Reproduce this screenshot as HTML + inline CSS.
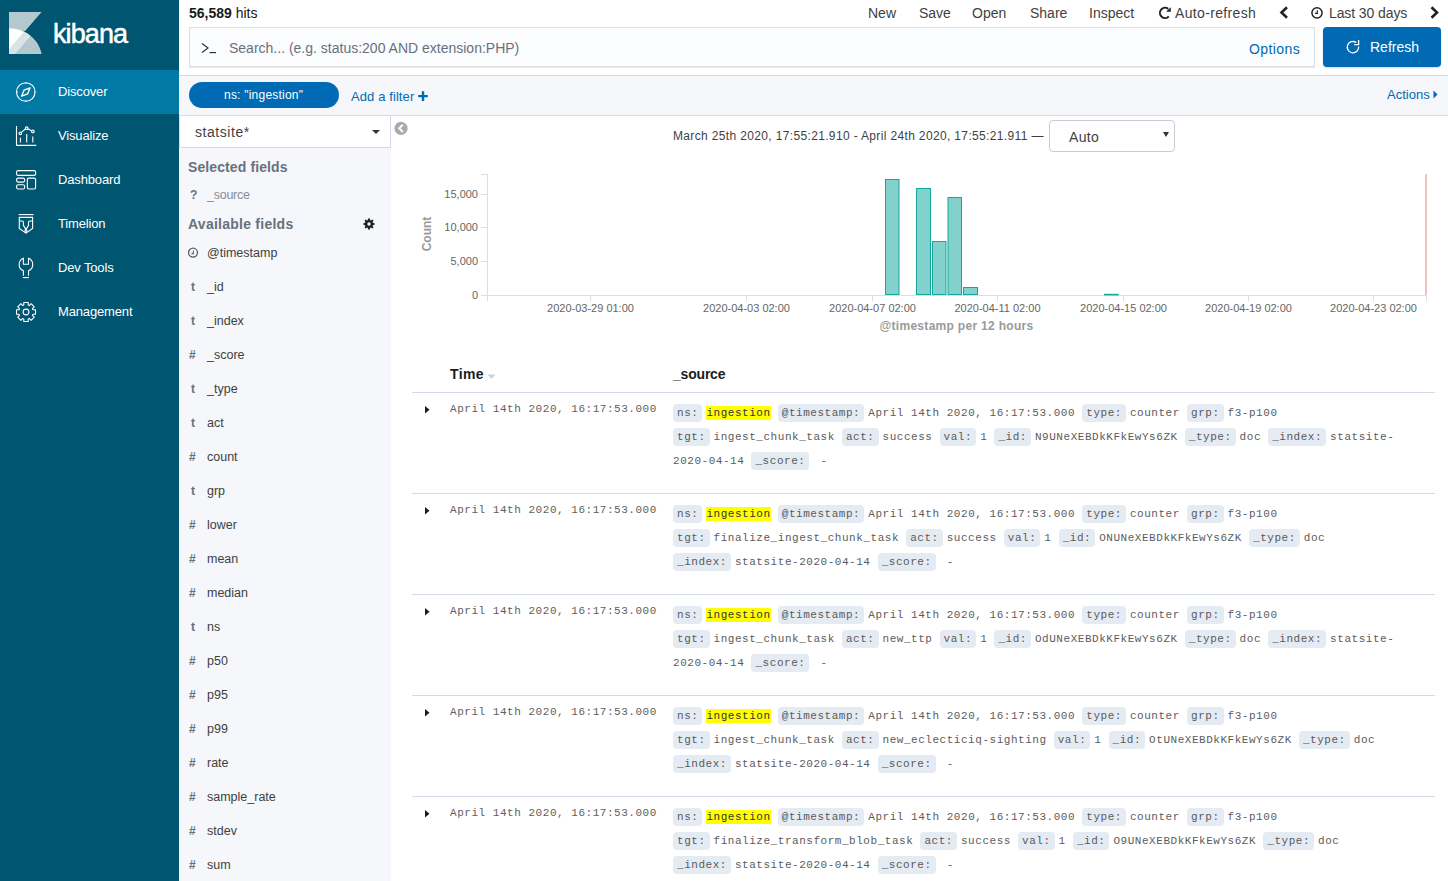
<!DOCTYPE html>
<html><head><meta charset="utf-8">
<style>
*{box-sizing:border-box;margin:0;padding:0}
html,body{width:1448px;height:881px;overflow:hidden;background:#fff;font-family:"Liberation Sans",sans-serif;color:#3f3f3f}
.abs{position:absolute}
#nav{position:absolute;left:0;top:0;width:179px;height:881px;background:#005571}
#nav .active{position:absolute;left:0;top:70px;width:179px;height:44px;background:#0079a5}
.navlbl{position:absolute;left:58px;font-size:13px;color:#fff;line-height:16px;white-space:nowrap;letter-spacing:-0.15px}
.navico{position:absolute;left:0;top:0}
.t{position:absolute;white-space:nowrap;line-height:1}
.mono{font-family:"Liberation Mono",monospace}
.row .dt{background:#e5ebf3;border-radius:4px;padding:2.77px 4px;margin-right:4px;color:#5a5a5a}
.src{position:absolute;left:673px;font-family:"Liberation Mono",monospace;font-size:11px;letter-spacing:0.533px;line-height:24px;white-space:pre;color:#5c5c5c}
.src mark{background:#ff0;padding:0.77px 0;color:#333}
.tm{position:absolute;left:450px;font-family:"Liberation Mono",monospace;font-size:11px;letter-spacing:0.533px;line-height:12px;white-space:pre;color:#606060}
.hr{position:absolute;left:412px;width:1023px;height:1px;background:#d3dae6}
</style></head><body>
<div id="nav">
  <div class="active"></div>
  <svg class="navico" width="179" height="340" viewBox="0 0 179 340">
    <!-- logo -->
    <defs><clipPath id="arc"><path d="M9,28.2 C26,28.2 39,40 41.6,54 L9,54 Z"/></clipPath></defs>
    <polygon points="9,12 41.6,12 24.9,31.2 9,28.2" fill="#b4c9cf"/>
    <g clip-path="url(#arc)">
      <rect x="9" y="20" width="40" height="40" fill="#b4c9cf"/>
      <polygon points="0,0 51.9,0 0,60" fill="#fff"/>
      <polygon points="51.9,0 61.7,0 0,71.4 0,60" fill="#d9e4e7"/>
    </g>

    <g fill="none" stroke="#fff" stroke-width="1.1">
      <circle cx="25.8" cy="92" r="9.3"/>
      <path d="M25.8,82.7v1.2M25.8,100.1v1.2M16.5,92h1.2M34,92h1.2" stroke-width="1"/>
      <path d="M30.1,87.8 L27.7,93.8 L21.6,96.2 L24.0,90.2 Z" stroke-width="1.3" stroke-linejoin="round"/>
      <path d="M16.5,126v19.4h19.8" />
      <path d="M20.4,137.8v4.8M26.7,134v8.6M32.8,136.6v6" />
      <path d="M21.3,132.4 L25.7,128.8 M27.7,128.8 L31.8,130.8"/>
      <circle cx="20.3" cy="133.3" r="1.3"/><circle cx="26.7" cy="128.2" r="1.3"/><circle cx="32.9" cy="131.4" r="1.3"/>
      <rect x="16.6" y="170.6" width="19" height="4.8" rx="1.5"/>
      <rect x="16.6" y="178.1" width="8" height="4" rx="1.5"/>
      <rect x="16.6" y="184.7" width="8" height="4.3" rx="1.5"/>
      <rect x="27.3" y="178.1" width="8.3" height="10.9" rx="1.5"/>
      <path d="M18.6,214.6h15"/>
      <path d="M19.3,217.4H32.6V228.4L25.95,233.1L19.3,228.4Z"/>
      <path d="M19.3,221H22.2Q23.4,221 23.4,222.2V225.4L25.95,229.6L28.5,225.4V222.2Q28.5,221 29.7,221H32.6"/><circle cx="25.95" cy="231" r="1.1"/>
      <path d="M23.4,275.8 V270.8 A6.8,6.8 0 0 1 23.4,258.2 V264.2 H28.5 V258.2 A6.8,6.8 0 0 1 28.5,270.8 V275.8"/>
      <path d="M22.9,277.6H28.9"/>
      <circle cx="26" cy="312" r="2.9"/>
      <path stroke-linejoin="round" d="M23.80,305.04 L23.80,302.50 L28.20,302.50 L28.20,305.04 A7.3,7.3 0 0 1 29.37,305.52 L31.16,303.73 L34.27,306.84 L32.48,308.63 A7.3,7.3 0 0 1 32.96,309.80 L35.50,309.80 L35.50,314.20 L32.96,314.20 A7.3,7.3 0 0 1 32.48,315.37 L34.27,317.16 L31.16,320.27 L29.37,318.48 A7.3,7.3 0 0 1 28.20,318.96 L28.20,321.50 L23.80,321.50 L23.80,318.96 A7.3,7.3 0 0 1 22.63,318.48 L20.84,320.27 L17.73,317.16 L19.52,315.37 A7.3,7.3 0 0 1 19.04,314.20 L16.50,314.20 L16.50,309.80 L19.04,309.80 A7.3,7.3 0 0 1 19.52,308.63 L17.73,306.84 L20.84,303.73 L22.63,305.52 A7.3,7.3 0 0 1 23.80,305.04Z"/>
    </g>
  </svg>
</div>
<div class="t" style="left:53px;top:21px;font-size:27px;color:#fff;letter-spacing:-0.9px;-webkit-text-stroke:0.5px #fff">kibana</div>
<div class="navlbl" style="top:84px">Discover</div>
<div class="navlbl" style="top:128px">Visualize</div>
<div class="navlbl" style="top:172px">Dashboard</div>
<div class="navlbl" style="top:216px">Timelion</div>
<div class="navlbl" style="top:260px">Dev Tools</div>
<div class="navlbl" style="top:304px">Management</div>

<!-- top bar -->
<div class="t" style="left:189px;top:6px;font-size:14px;color:#1a1a1a"><b>56,589</b> hits</div>
<div class="t" style="left:868px;top:6px;font-size:14px;color:#3f3f3f">New</div>
<div class="t" style="left:919px;top:6px;font-size:14px;color:#3f3f3f">Save</div>
<div class="t" style="left:972px;top:6px;font-size:14px;color:#3f3f3f">Open</div>
<div class="t" style="left:1030px;top:6px;font-size:14px;color:#3f3f3f">Share</div>
<div class="t" style="left:1089px;top:6px;font-size:14px;color:#3f3f3f">Inspect</div>
<div class="t" style="left:1175px;top:6px;font-size:14px;color:#3f3f3f;letter-spacing:0.35px">Auto-refresh</div>
<div class="t" style="left:1329px;top:6px;font-size:14px;color:#3f3f3f;letter-spacing:-0.1px">Last 30 days</div>

<!-- search -->
<div class="abs" style="left:189px;top:27px;width:1126px;height:40px;background:#fbfcfd;border:1px solid #dedfe1;box-shadow:0 1px 1px rgba(0,0,0,.08)"></div>
<div class="t" style="left:229px;top:41px;font-size:14px;color:#69707d">Search... (e.g. status:200 AND extension:PHP)</div>
<div class="t" style="left:1249px;top:42px;font-size:14px;color:#006bb4;letter-spacing:0.4px">Options</div>
<div class="abs" style="left:1323px;top:27px;width:118px;height:40px;background:#006bb4;border-radius:4px;box-shadow:0 1px 2px rgba(0,0,0,.15)"></div>
<div class="t" style="left:1370px;top:40px;font-size:14px;color:#fff">Refresh</div>

<!-- filter bar -->
<div class="abs" style="left:179px;top:75px;width:1269px;height:41px;background:#f5f7fa;border-top:1px solid #d3dae6;border-bottom:1px solid #d3dae6"></div>
<div class="abs" style="left:189px;top:82px;width:150px;height:26px;background:#006bb4;border-radius:13px"></div>
<div class="t" style="left:224px;top:89px;font-size:12px;color:#fff;letter-spacing:0.22px">ns: "ingestion"</div>
<div class="t" style="left:351px;top:90px;font-size:13px;color:#006bb4;letter-spacing:0.1px">Add a filter</div>
<div class="t" style="left:1387px;top:88px;font-size:13px;color:#006bb4">Actions</div>

<!-- discover sidebar -->
<div class="abs" style="left:179px;top:116px;width:212px;height:765px;background:#f5f7fa"></div>
<div class="abs" style="left:179px;top:116px;width:212px;height:32px;background:#fff;border:1px solid #d3dae6;border-top:0"></div>
<div class="t" style="left:195px;top:125px;font-size:14px;color:#3f3f3f;letter-spacing:0.55px">statsite*</div>


<!-- top nav icons -->
<svg class="abs" style="left:0;top:0" width="1448" height="160">
  <!-- auto-refresh icon -->
  <path d="M1168.2,8.9 A5.1,5.1 0 1 0 1168.8,16.4" fill="none" stroke="#222" stroke-width="2"/>
  <path d="M1170.8,7.2 L1170.8,11.8 L1166.1,11.8 Z" fill="#222"/>
  <!-- chevrons -->
  <path d="M1287,7.2 L1281.5,12.5 L1287,17.8" fill="none" stroke="#222" stroke-width="2.6"/>
  <path d="M1431.5,7.2 L1437,12.5 L1431.5,17.8" fill="none" stroke="#222" stroke-width="2.6"/>
  <!-- clock -->
  <circle cx="1317" cy="12.8" r="5.1" fill="none" stroke="#222" stroke-width="1.5"/>
  <path d="M1317.3,10.2 V13.3 H1315" fill="none" stroke="#222" stroke-width="1.2"/>
  <!-- prompt >_ -->
  <path d="M202,43.5 L208,48 L202,52.5" fill="none" stroke="#333" stroke-width="1.2"/>
  <path d="M209.5,52.6 H216" stroke="#333" stroke-width="1.2"/>
  <!-- refresh icon -->
  <path d="M1356.3,42.6 A5.7,5.7 0 1 0 1358.6,46.6" fill="none" stroke="#fff" stroke-width="1.3"/>
  <path d="M1358.6,40.1 V44.6 H1354.2" fill="none" stroke="#fff" stroke-width="1.3"/>
  <!-- add filter plus -->
  <path d="M423,91.3 v9.6 M418.2,96.1 h9.6" stroke="#006bb4" stroke-width="2.4"/>
  <!-- actions caret -->
  <path d="M1433.5,90.5 L1437.5,94.5 L1433.5,98.5 Z" fill="#006bb4"/>
  <!-- index caret -->
  <path d="M372,130 L380,130 L376,134 Z" fill="#333"/>
  <!-- collapse button -->
  <circle cx="401" cy="128.3" r="6.6" fill="#aaa"/>
  <path d="M402.8,124.6 L399.3,128.3 L402.8,132" fill="none" stroke="#fff" stroke-width="2"/>
</svg>

<!-- sidebar field headers -->
<div class="t" style="left:188px;top:160px;font-size:14px;font-weight:bold;color:#69707d;letter-spacing:0.1px">Selected fields</div>
<div class="t" style="left:190px;top:189px;font-size:12px;font-weight:bold;color:#69707d">?</div>
<div class="t" style="left:207px;top:189px;font-size:12.5px;color:#8a8d93;letter-spacing:-0.25px">_source</div>
<div class="t" style="left:188px;top:217px;font-size:14px;font-weight:bold;color:#69707d;letter-spacing:0.25px">Available fields</div>
<svg class="abs" style="left:362px;top:217px" width="14" height="14" viewBox="0 0 14 14"><path fill-rule="evenodd" fill="#222" d="M11.07,5.98 L12.49,5.91 L12.49,8.09 L11.07,8.02 L10.60,9.16 L11.66,10.11 L10.11,11.66 L9.16,10.60 L8.02,11.07 L8.09,12.49 L5.91,12.49 L5.98,11.07 L4.84,10.60 L3.89,11.66 L2.34,10.11 L3.40,9.16 L2.93,8.02 L1.51,8.09 L1.51,5.91 L2.93,5.98 L3.40,4.84 L2.34,3.89 L3.89,2.34 L4.84,3.40 L5.98,2.93 L5.91,1.51 L8.09,1.51 L8.02,2.93 L9.16,3.40 L10.11,2.34 L11.66,3.89 L10.60,4.84Z M8.7,7 A1.7,1.7 0 1 0 5.3,7 A1.7,1.7 0 1 0 8.7,7Z"/></svg>
<svg class="abs" style="left:188px;top:247px" width="11" height="11" viewBox="0 0 11 11"><circle cx="5" cy="5.6" r="4.5" fill="none" stroke="#5a6070" stroke-width="1.3"/><path d="M5.4,3.4V6.6H3.4" fill="none" stroke="#5a6070" stroke-width="1.1"/></svg>
<div class="t" style="left:207px;top:247px;font-size:12.5px;color:#3f3f3f">@timestamp</div>
<div class="t" style="left:191px;top:281px;font-size:12px;font-weight:bold;color:#69707d">t</div><div class="t" style="left:207px;top:281px;font-size:12.5px;color:#3f3f3f">_id</div>
<div class="t" style="left:191px;top:315px;font-size:12px;font-weight:bold;color:#69707d">t</div><div class="t" style="left:207px;top:315px;font-size:12.5px;color:#3f3f3f">_index</div>
<div class="t" style="left:189px;top:349px;font-size:12px;font-weight:bold;color:#69707d">#</div><div class="t" style="left:207px;top:349px;font-size:12.5px;color:#3f3f3f">_score</div>
<div class="t" style="left:191px;top:383px;font-size:12px;font-weight:bold;color:#69707d">t</div><div class="t" style="left:207px;top:383px;font-size:12.5px;color:#3f3f3f">_type</div>
<div class="t" style="left:191px;top:417px;font-size:12px;font-weight:bold;color:#69707d">t</div><div class="t" style="left:207px;top:417px;font-size:12.5px;color:#3f3f3f">act</div>
<div class="t" style="left:189px;top:451px;font-size:12px;font-weight:bold;color:#69707d">#</div><div class="t" style="left:207px;top:451px;font-size:12.5px;color:#3f3f3f">count</div>
<div class="t" style="left:191px;top:485px;font-size:12px;font-weight:bold;color:#69707d">t</div><div class="t" style="left:207px;top:485px;font-size:12.5px;color:#3f3f3f">grp</div>
<div class="t" style="left:189px;top:519px;font-size:12px;font-weight:bold;color:#69707d">#</div><div class="t" style="left:207px;top:519px;font-size:12.5px;color:#3f3f3f">lower</div>
<div class="t" style="left:189px;top:553px;font-size:12px;font-weight:bold;color:#69707d">#</div><div class="t" style="left:207px;top:553px;font-size:12.5px;color:#3f3f3f">mean</div>
<div class="t" style="left:189px;top:587px;font-size:12px;font-weight:bold;color:#69707d">#</div><div class="t" style="left:207px;top:587px;font-size:12.5px;color:#3f3f3f">median</div>
<div class="t" style="left:191px;top:621px;font-size:12px;font-weight:bold;color:#69707d">t</div><div class="t" style="left:207px;top:621px;font-size:12.5px;color:#3f3f3f">ns</div>
<div class="t" style="left:189px;top:655px;font-size:12px;font-weight:bold;color:#69707d">#</div><div class="t" style="left:207px;top:655px;font-size:12.5px;color:#3f3f3f">p50</div>
<div class="t" style="left:189px;top:689px;font-size:12px;font-weight:bold;color:#69707d">#</div><div class="t" style="left:207px;top:689px;font-size:12.5px;color:#3f3f3f">p95</div>
<div class="t" style="left:189px;top:723px;font-size:12px;font-weight:bold;color:#69707d">#</div><div class="t" style="left:207px;top:723px;font-size:12.5px;color:#3f3f3f">p99</div>
<div class="t" style="left:189px;top:757px;font-size:12px;font-weight:bold;color:#69707d">#</div><div class="t" style="left:207px;top:757px;font-size:12.5px;color:#3f3f3f">rate</div>
<div class="t" style="left:189px;top:791px;font-size:12px;font-weight:bold;color:#69707d">#</div><div class="t" style="left:207px;top:791px;font-size:12.5px;color:#3f3f3f">sample_rate</div>
<div class="t" style="left:189px;top:825px;font-size:12px;font-weight:bold;color:#69707d">#</div><div class="t" style="left:207px;top:825px;font-size:12.5px;color:#3f3f3f">stdev</div>
<div class="t" style="left:189px;top:859px;font-size:12px;font-weight:bold;color:#69707d">#</div><div class="t" style="left:207px;top:859px;font-size:12.5px;color:#3f3f3f">sum</div>

<!-- chart header -->
<div class="t" style="left:673px;top:129.5px;font-size:12px;color:#3f3f3f;letter-spacing:0.35px">March 25th 2020, 17:55:21.910 - April 24th 2020, 17:55:21.911 —</div>
<div class="abs" style="left:1049px;top:120px;width:126px;height:32px;border:1px solid #c9cdd4;border-radius:4px;background:#fff"></div>
<div class="t" style="left:1069px;top:130px;font-size:14px;color:#3f3f3f;letter-spacing:0.3px">Auto</div>
<svg class="abs" style="left:1160px;top:130px" width="12" height="10"><path d="M3,2 L9,2 L6,7 Z" fill="#333"/></svg>
<svg class="abs" style="left:400px;top:160px" width="1048" height="180" viewBox="400 160 1048 180">
  <g stroke="#ddd" stroke-width="1" fill="none" shape-rendering="crispEdges">
    <path d="M487.5,174 V295.5 H1426"/>
    <path d="M481,174.5 H487 M481,194.5 H487 M481,227.5 H487 M481,261.5 H487 M481,295.5 H487"/>
    <path d="M487.5,295 V301 M590.5,295 V301 M746.5,295 V301 M872.5,295 V301 M997.5,295 V301 M1123.5,295 V301 M1248.5,295 V301 M1373.5,295 V301 M1426.5,295 V301"/>
  </g>
  <g font-family="Liberation Sans" font-size="11" fill="#666" text-anchor="end">
    <text x="478" y="198">15,000</text>
    <text x="478" y="231">10,000</text>
    <text x="478" y="265">5,000</text>
    <text x="478" y="298.5">0</text>
  </g>
  <g font-family="Liberation Sans" font-size="11" fill="#666" text-anchor="middle">
    <text x="590.5" y="312">2020-03-29 01:00</text>
    <text x="746.5" y="312">2020-04-03 02:00</text>
    <text x="872.5" y="312">2020-04-07 02:00</text>
    <text x="997.5" y="312">2020-04-11 02:00</text>
    <text x="1123.5" y="312">2020-04-15 02:00</text>
    <text x="1248.5" y="312">2020-04-19 02:00</text>
    <text x="1373.5" y="312">2020-04-23 02:00</text>
  </g>
  <text x="956.5" y="330" font-family="Liberation Sans" font-size="12" font-weight="bold" fill="#999" text-anchor="middle" letter-spacing="0.3">@timestamp per 12 hours</text>
  <text transform="translate(430.5 234) rotate(-90)" font-family="Liberation Sans" font-size="12" font-weight="bold" fill="#999" text-anchor="middle">Count</text>
  <g fill="#83d1cc" stroke="#13a89d" stroke-width="1">
    <rect x="885.5" y="179.5" width="13.5" height="115"/>
    <rect x="916.5" y="188.5" width="14" height="106"/>
    <rect x="932.5" y="241.5" width="13.5" height="53"/>
    <rect x="948" y="197.5" width="13.5" height="97"/>
    <rect x="963.5" y="287.5" width="14" height="7"/>
    <rect x="1104.5" y="294.2" width="14" height="0.8" stroke-width="0.8"/>
  </g>
  <path d="M1426,174 V295" stroke="#e9a7aa" stroke-width="1.4"/>
</svg>

<!-- table -->
<div class="t" style="left:450px;top:367px;font-size:14px;font-weight:bold;color:#1a1c21;letter-spacing:0.4px">Time</div>
<svg class="abs" style="left:486px;top:373px" width="12" height="8"><path d="M1.5,1.5 L9.5,1.5 L5.5,6 Z" fill="#cdd3de"/></svg>
<div class="t" style="left:673px;top:367px;font-size:14px;font-weight:bold;color:#1a1c21;letter-spacing:-0.2px">_source</div>
<div class="abs" style="left:412px;top:392px;width:1023px;height:1px;background:#d3dae6"></div>

<!-- rows -->
<div class="row"><svg class="abs" style="left:424px;top:405px" width="7" height="10"><path d="M1,1 L5.5,4.8 L1,8.6 Z" fill="#1a1c21"/></svg><div class="tm" style="top:403px">April 14th 2020, 16:17:53.000</div><div class="src" style="top:401px"><span class="dt">ns:</span><mark>ingestion</mark> <span class="dt">@timestamp:</span>April 14th 2020, 16:17:53.000 <span class="dt">type:</span>counter <span class="dt">grp:</span>f3-p100
<span class="dt">tgt:</span>ingest_chunk_task <span class="dt">act:</span>success <span class="dt">val:</span>1 <span class="dt">_id:</span>N9UNeXEBDkKFkEwYs6ZK <span class="dt">_type:</span>doc <span class="dt">_index:</span>statsite-
2020-04-14 <span class="dt">_score:</span> -</div></div>
<div class="hr" style="top:493px"></div>
<div class="row"><svg class="abs" style="left:424px;top:506px" width="7" height="10"><path d="M1,1 L5.5,4.8 L1,8.6 Z" fill="#1a1c21"/></svg><div class="tm" style="top:504px">April 14th 2020, 16:17:53.000</div><div class="src" style="top:502px"><span class="dt">ns:</span><mark>ingestion</mark> <span class="dt">@timestamp:</span>April 14th 2020, 16:17:53.000 <span class="dt">type:</span>counter <span class="dt">grp:</span>f3-p100
<span class="dt">tgt:</span>finalize_ingest_chunk_task <span class="dt">act:</span>success <span class="dt">val:</span>1 <span class="dt">_id:</span>ONUNeXEBDkKFkEwYs6ZK <span class="dt">_type:</span>doc
<span class="dt">_index:</span>statsite-2020-04-14 <span class="dt">_score:</span> -</div></div>
<div class="hr" style="top:594px"></div>
<div class="row"><svg class="abs" style="left:424px;top:607px" width="7" height="10"><path d="M1,1 L5.5,4.8 L1,8.6 Z" fill="#1a1c21"/></svg><div class="tm" style="top:605px">April 14th 2020, 16:17:53.000</div><div class="src" style="top:603px"><span class="dt">ns:</span><mark>ingestion</mark> <span class="dt">@timestamp:</span>April 14th 2020, 16:17:53.000 <span class="dt">type:</span>counter <span class="dt">grp:</span>f3-p100
<span class="dt">tgt:</span>ingest_chunk_task <span class="dt">act:</span>new_ttp <span class="dt">val:</span>1 <span class="dt">_id:</span>OdUNeXEBDkKFkEwYs6ZK <span class="dt">_type:</span>doc <span class="dt">_index:</span>statsite-
2020-04-14 <span class="dt">_score:</span> -</div></div>
<div class="hr" style="top:695px"></div>
<div class="row"><svg class="abs" style="left:424px;top:708px" width="7" height="10"><path d="M1,1 L5.5,4.8 L1,8.6 Z" fill="#1a1c21"/></svg><div class="tm" style="top:706px">April 14th 2020, 16:17:53.000</div><div class="src" style="top:704px"><span class="dt">ns:</span><mark>ingestion</mark> <span class="dt">@timestamp:</span>April 14th 2020, 16:17:53.000 <span class="dt">type:</span>counter <span class="dt">grp:</span>f3-p100
<span class="dt">tgt:</span>ingest_chunk_task <span class="dt">act:</span>new_eclecticiq-sighting <span class="dt">val:</span>1 <span class="dt">_id:</span>OtUNeXEBDkKFkEwYs6ZK <span class="dt">_type:</span>doc
<span class="dt">_index:</span>statsite-2020-04-14 <span class="dt">_score:</span> -</div></div>
<div class="hr" style="top:796px"></div>
<div class="row"><svg class="abs" style="left:424px;top:809px" width="7" height="10"><path d="M1,1 L5.5,4.8 L1,8.6 Z" fill="#1a1c21"/></svg><div class="tm" style="top:807px">April 14th 2020, 16:17:53.000</div><div class="src" style="top:805px"><span class="dt">ns:</span><mark>ingestion</mark> <span class="dt">@timestamp:</span>April 14th 2020, 16:17:53.000 <span class="dt">type:</span>counter <span class="dt">grp:</span>f3-p100
<span class="dt">tgt:</span>finalize_transform_blob_task <span class="dt">act:</span>success <span class="dt">val:</span>1 <span class="dt">_id:</span>O9UNeXEBDkKFkEwYs6ZK <span class="dt">_type:</span>doc
<span class="dt">_index:</span>statsite-2020-04-14 <span class="dt">_score:</span> -</div></div>
<div class="hr" style="top:897px"></div>
</body></html>
